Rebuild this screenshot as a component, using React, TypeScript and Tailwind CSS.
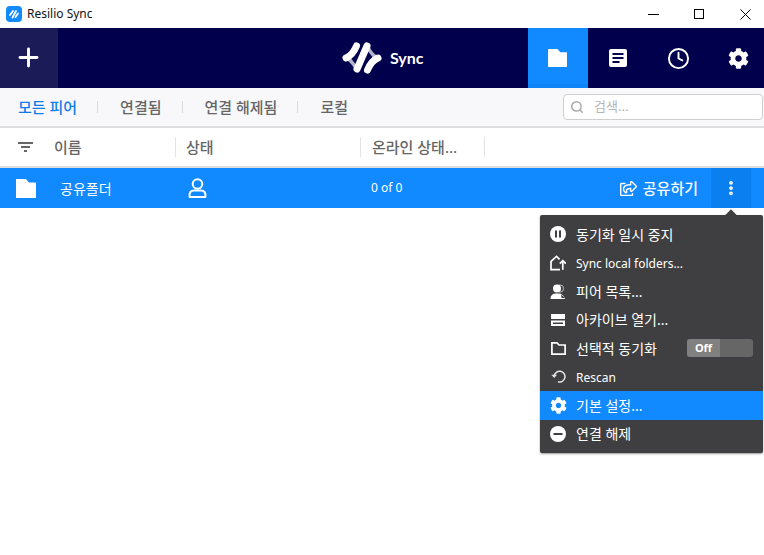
import { Plus, Clock, Search, EllipsisVertical } from 'lucide-react'
import { FaCog, FaRegShareSquare } from 'react-icons/fa'

const font = "font-['Noto_Sans','Noto_Sans_CJK_KR',sans-serif]"

const Logo = () => (
  <svg width="48" height="40" viewBox="0 0 48 40" fill="none" strokeLinecap="round">
    <path d="M5 20 C11 23 15 27 17 33 L19 28 L12 19Z" fill="#b4b4cc" />
    <path d="M43 20 C37 17 33 13 31 7 L29 12 L36 21Z" fill="#b4b4cc" />
    <path d="M18.5 8 C16 14 13 18 8 20" stroke="#fff" strokeWidth="7" />
    <path d="M29 8 L19 31" stroke="#fff" strokeWidth="7" />
    <path d="M29.5 32 C32 26 35 22 40 20" stroke="#fff" strokeWidth="7" />
  </svg>
)

const FolderIcon = ({ className }: { className: string }) => (
  <svg className={className} viewBox="0 0 20 19" fill="currentColor">
    <path d="M0 0.5 Q0 0 0.5 0 H10 L13 3.5 H19.5 Q20 3.5 20 4 V18.5 Q20 19 19.5 19 H0.5 Q0 19 0 18.5Z" />
  </svg>
)

const menuIcons: Record<string, React.ReactNode> = {
  pause: (
    <svg width="16" height="16" viewBox="0 0 16 16">
      <circle cx="8" cy="8" r="8" fill="#fff" />
      <rect x="5" y="4.5" width="2" height="7" fill="#3f3f41" />
      <rect x="9" y="4.5" width="2" height="7" fill="#3f3f41" />
    </svg>
  ),
  sync: (
    <svg width="16" height="16" viewBox="0 0 16 16" fill="none" stroke="#fff" strokeWidth="1.7">
      <path d="M10 14.6 H1 V6.3 L6.5 1.3 L9.6 4.3" />
      <path d="M12.8 14.8 V6" />
      <path d="M9.8 8.6 L12.8 5.6 L15.8 8.6" />
    </svg>
  ),
  peers: (
    <svg width="16" height="15" viewBox="0 0 16 15" fill="#fff">
      <circle cx="10" cy="4.5" r="3.6" fill="none" stroke="#bdbdbd" strokeWidth="1" />
      <circle cx="7" cy="4.5" r="4" />
      <path d="M0.5 15 Q0.5 9.5 6 9.5 H9 Q13 9.5 15 15Z" />
      <path d="M11 10.5 L15 14 L11.5 14Z" fill="#3f3f41" />
    </svg>
  ),
  archive: (
    <svg width="14" height="12" viewBox="0 0 14 12" fill="#fff">
      <rect width="14" height="5" />
      <path d="M0 6.5 H14 V12 H0Z M2 8.5 V10 H12 V8.5Z" fillRule="evenodd" />
    </svg>
  ),
  folder: (
    <svg width="15" height="13" viewBox="0 0 15 13" fill="none" stroke="#fff" strokeWidth="1.7">
      <path d="M0.9 0.9 H6 L8 3 H14.1 V12.1 H0.9Z" />
    </svg>
  ),
  rescan: (
    <svg width="15" height="15" viewBox="0 0 15 15" fill="none">
      <path d="M3.2 7 A5.4 5.4 0 1 1 7 12.8" stroke="#e4e4e4" strokeWidth="1.5" />
      <path d="M0.3 5.8 H6 L3.2 9Z" fill="#e4e4e4" />
    </svg>
  ),
  gear: <FaCog size={17} color="#fff" />,
  minus: (
    <svg width="16" height="16" viewBox="0 0 16 16">
      <circle cx="8" cy="8" r="8" fill="#fff" />
      <rect x="3.5" y="7" width="9" height="2" fill="#3f3f41" />
    </svg>
  ),
}

const menuItems = [
  { icon: 'pause', label: '동기화 일시 중지' },
  { icon: 'sync', label: 'Sync local folders...', latin: true },
  { icon: 'peers', label: '피어 목록...' },
  { icon: 'archive', label: '아카이브 열기...' },
  { icon: 'folder', label: '선택적 동기화', toggle: true },
  { icon: 'rescan', label: 'Rescan', latin: true },
  { icon: 'gear', label: '기본 설정...', active: true },
  { icon: 'minus', label: '연결 해제' },
]

const tabs = ['모든 피어', '연결됨', '연결 해제됨', '로컬']

export default function App() {
  return (
    <div className={`relative w-[764px] h-[555px] overflow-hidden bg-white ${font}`}>
      {/* title bar */}
      <div className="flex items-center h-[28px] pl-[6px] bg-white">
        <div className="flex items-center justify-center w-[16px] h-[16px] rounded-[4px] bg-[#118aff]">
          <svg width="12" height="12" viewBox="0 0 12 12" stroke="#fff" strokeWidth="1.8" strokeLinecap="round">
            <path d="M2 7 L5 3" />
            <path d="M4.5 9.5 L8 3" />
            <path d="M7.5 9 L10 5.5" />
          </svg>
        </div>
        <span className="ml-[5px] text-[12px] text-[#111]">Resilio Sync</span>
        <div className="ml-auto flex items-center text-black">
          <div className="flex justify-center w-[46px]"><div className="w-[11px] h-px bg-black" /></div>
          <div className="flex justify-center w-[46px]"><div className="w-[10px] h-[10px] border border-black" /></div>
          <div className="flex justify-center w-[46px] mr-[-4px]">
            <svg width="11" height="11" viewBox="0 0 11 11" stroke="#000" strokeWidth="1">
              <path d="M0.5 0.5 L10.5 10.5" />
              <path d="M10.5 0.5 L0.5 10.5" />
            </svg>
          </div>
        </div>
      </div>

      {/* header */}
      <div className="flex h-[60px] bg-[#00004d]">
        <div className="flex items-center justify-center w-[58px] bg-[#1b1b57]">
          <Plus size={29} color="#fff" strokeWidth={2.4} className="mr-[1px] mb-[1px]" />
        </div>
        <div className="flex items-center pl-[280px] flex-1">
          <Logo />
          <span className="ml-[4px] text-[16px] font-bold text-white font-['Lato',sans-serif]">Sync</span>
        </div>
        <div className="flex mr-[-4px]">
          <div className="flex items-center justify-center w-[60px] bg-[#118aff] text-white border-b-[4px] border-[#0e85f7]">
            <FolderIcon className="w-[19px] h-[18px] mt-[3px] mr-[1px]" />
          </div>
          <div className="flex items-center justify-center w-[60px]">
            <svg width="18" height="18" viewBox="0 0 18 18">
              <rect width="18" height="18" rx="2" fill="#fff" />
              <rect x="3.5" y="4" width="11" height="2" fill="#00004d" />
              <rect x="3.5" y="8" width="11" height="2" fill="#00004d" />
              <rect x="3.5" y="12" width="7" height="2" fill="#00004d" />
            </svg>
          </div>
          <div className="flex items-center justify-center w-[60px]">
            <Clock size={23} color="#fff" strokeWidth={2} />
          </div>
          <div className="flex items-center justify-center w-[60px]">
            <FaCog size={21} color="#fff" />
          </div>
        </div>
      </div>

      {/* tabs */}
      <div className="flex items-center h-[40px] bg-[#f8f8fb] border-b-2 border-[#dedede]">
        <div className="flex items-center pl-[18px] text-[15px] font-medium">
          {tabs.map((t, i) => (
            <div key={t} className="flex items-center">
              {i > 0 && <div className="w-px h-[12px] bg-[#dcdcdc] ml-[20px] mr-[22px]" />}
              <span className={i === 0 ? 'text-[#0f7ce8]' : 'text-[#666]'}>{t}</span>
            </div>
          ))}
        </div>
        <div className="ml-auto mr-[1px] flex items-center w-[200px] h-[26px] rounded-[4px] border border-[#cfcfcf] bg-white pl-[6px]">
          <Search size={14} color="#aaa" strokeWidth={2.6} />
          <span className="ml-[10px] text-[13px] text-[#b5b5b5]">검색...</span>
        </div>
      </div>

      {/* column header */}
      <div className="flex items-center h-[40px] bg-white border-b-2 border-[#dedede] text-[15px] font-medium text-[#666]">
        <svg className="ml-[18px]" width="15" height="10" viewBox="0 0 15 10" fill="#666">
          <rect width="15" height="2" />
          <rect x="3" y="4" width="9" height="2" />
          <rect x="6" y="8" width="3" height="2" />
        </svg>
        <span className="ml-[21px] w-[121px]">이름</span>
        <div className="w-px h-[20px] bg-[#e3e3e3]" />
        <span className="ml-[10px] w-[174px]">상태</span>
        <div className="w-px h-[20px] bg-[#e3e3e3]" />
        <span className="ml-[11px] w-[112px]">온라인 상태...</span>
        <div className="w-px h-[20px] bg-[#e3e3e3]" />
      </div>

      {/* row */}
      <div className="flex items-center h-[40px] bg-[#118aff] text-white">
        <FolderIcon className="ml-[16px] w-[20px] h-[19px]" />
        <span className="ml-[24px] w-[128px] text-[14px]">공유폴더</span>
        <svg width="19" height="20" viewBox="0 0 19 20" fill="none" stroke="#fff" strokeWidth="2">
          <circle cx="9.5" cy="6" r="4.8" />
          <path d="M1.6 19 Q0.8 12.5 6 12.5 H13 Q18.2 12.5 17.4 19Z" strokeLinejoin="round" />
        </svg>
        <span className="ml-[164px] text-[12px]">0 of 0</span>
        <FaRegShareSquare size={17} className="ml-auto" />
        <span className="ml-[6px] mr-[13px] text-[15px] font-medium">공유하기</span>
        <div className="flex items-center justify-center w-[40px] h-full bg-[#0a7ff0] mr-[13px]">
          <EllipsisVertical size={18} strokeWidth={3} />
        </div>
      </div>

      {/* context menu */}
      <div className="absolute left-[540px] top-[215px] w-[223px] py-[5px] rounded-[2px] bg-[#3f3f41] shadow-[0_1px_2px_rgba(0,0,0,0.4)] text-white text-[14px]">
        <div className="absolute left-[187px] top-[-4px] w-[8px] h-[8px] rotate-45 bg-[#3f3f41]" />
        {menuItems.map((item) => (
          <div key={item.label} className={`flex items-center h-[28.5px] ${item.active ? 'bg-[#118aff]' : ''}`}>
            <div className="flex items-center justify-center w-[36px]">{menuIcons[item.icon]}</div>
            <span className={item.latin ? 'text-[12px] mt-[2px]' : ''}>{item.label}</span>
            {item.toggle && (
              <div className="ml-auto mr-[10px] flex w-[66px] h-[18px] rounded-[3px] bg-[#666] overflow-hidden text-[11px] font-bold">
                <div className="flex items-center justify-center w-[33px] bg-[#808080]">Off</div>
              </div>
            )}
          </div>
        ))}
      </div>
    </div>
  )
}
